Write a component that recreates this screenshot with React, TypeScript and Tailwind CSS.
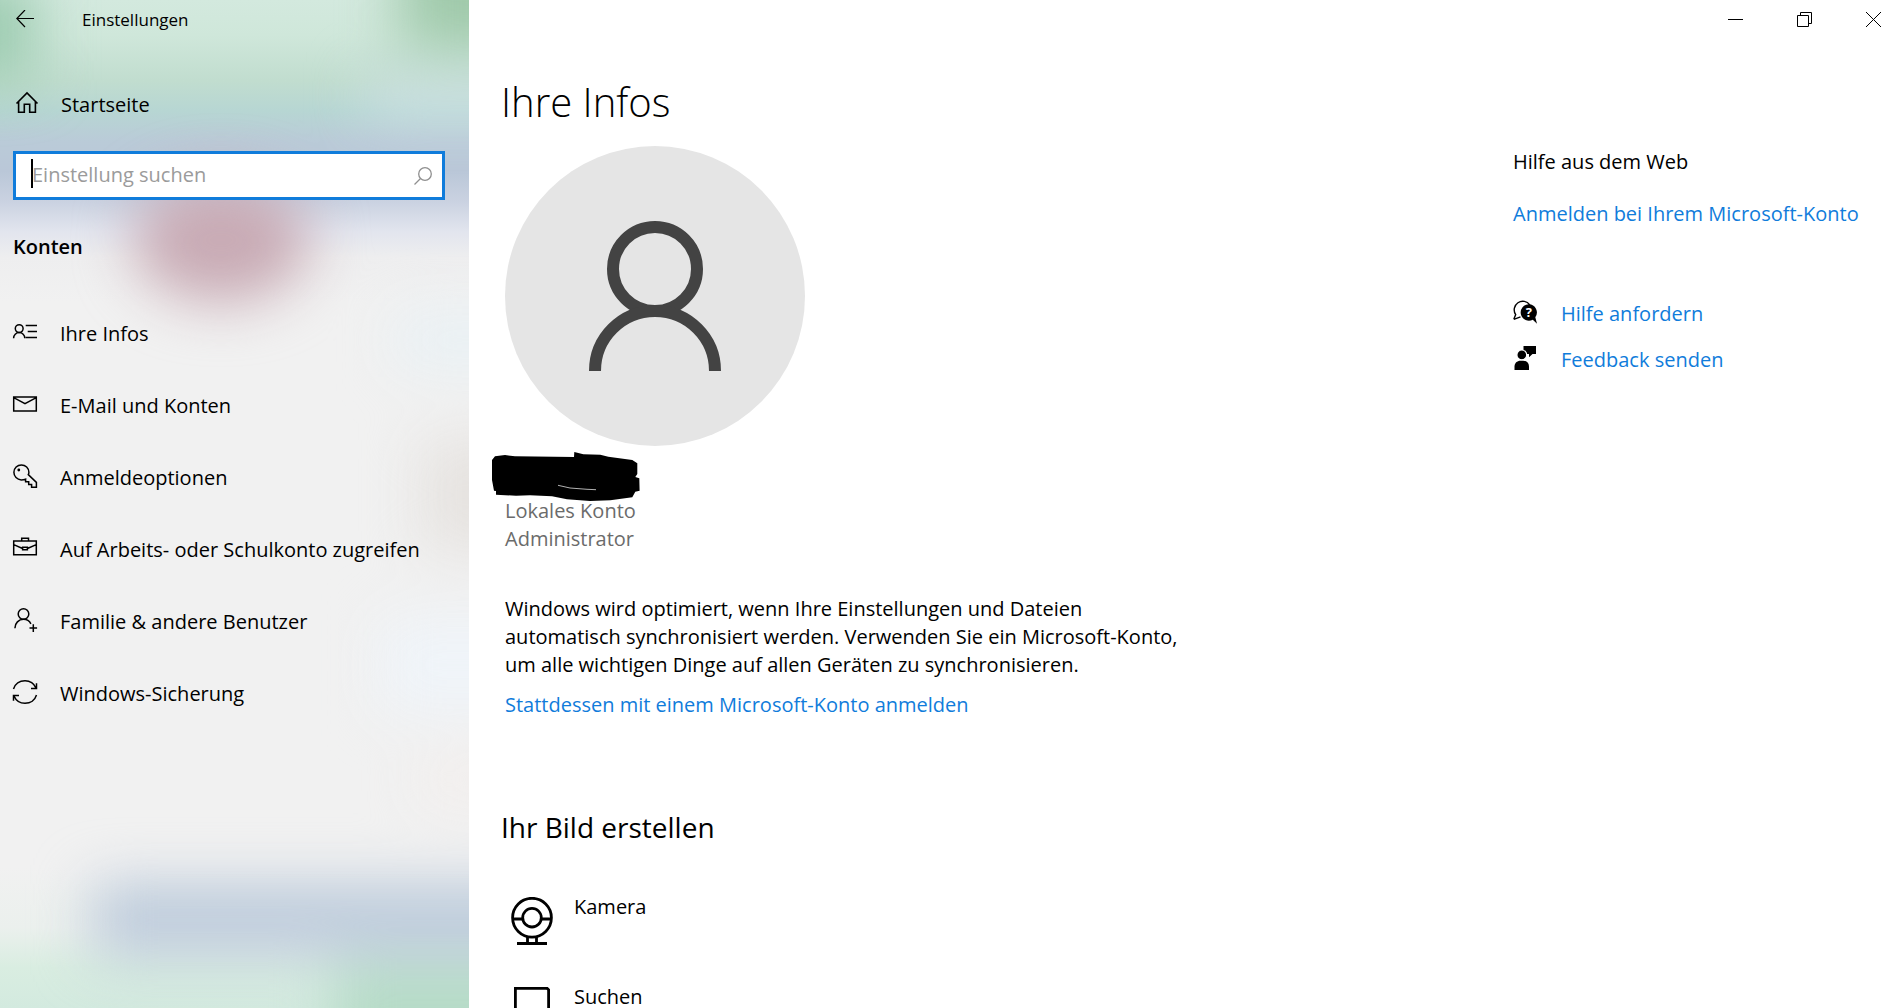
import { useState } from 'react';
import type { ReactNode } from 'react';

function NavIcon({ children }: { children: ReactNode }) {
  return (
    <svg viewBox="0 0 24 24" className="mb-1 size-6 shrink-0 overflow-visible" fill="none" stroke="currentColor" strokeWidth="1.5" aria-hidden="true">
      {children}
    </svg>
  );
}

const navItems = [
  {
    label: 'Ihre Infos',
    icon: (
      <>
        <circle cx="6.2" cy="8.6" r="3.9" />
        <path d="M.6 18.2c0-3.2 2.5-5.6 5.6-5.6s5.6 2.4 5.6 5.6M12.7 5.5H24M14.7 11.5H24M12.7 17.5H24" />
      </>
    ),
  },
  {
    label: 'E-Mail und Konten',
    icon: <path d="M.7 4.9h22.6v14H.7zM.7 5.6 12 11.6l11.3-6" />,
  },
  {
    label: 'Anmeldeoptionen',
    icon: (
      <>
        <path d="M15.3 10.6 23.4 18.4v4.9h-4.8v-2.8h-2.9v-2.8h-3.1v-2.6C11.5 15.5 10 15.9 8.2 15.9A7.5 7.5 0 1 1 15.9 8.3c0 .8-.2 1.6-.6 2.3z" />
        <circle cx="5.8" cy="6" r="1.4" fill="currentColor" stroke="none" />
      </>
    ),
  },
  {
    label: 'Auf Arbeits- oder Schulkonto zugreifen',
    icon: <path d="M.7 4.9h22.6v13.8H.7zM8.7 4.9V2.2h6.8v2.7M.7 8.6l8.9 3.9M23.3 8.6l-8.9 3.9M9.6 11.3h4.8v2.5H9.6z" />,
  },
  {
    label: 'Familie & andere Benutzer',
    icon: (
      <>
        <circle cx="10.5" cy="6" r="5.3" />
        <path d="M1.9 20.2c0-5 3.8-8.9 8.6-8.9 3.4 0 6 1.7 7.4 4.6M20.3 16.3v7.6M16.5 20.1h7.6" />
      </>
    ),
  },
  {
    label: 'Windows-Sicherung',
    icon: (
      <path d="M.5 9C2 4 6.6.7 12 .7c4.9 0 9.1 2.9 11 7.3M23.5 3.2V8.5H18M23.5 15c-1.5 5-6.1 8.3-11.5 8.3-4.9 0-9.1-2.9-11-7.3M.5 20.8V15.5H6" />
    ),
  },
];

function Backdrop() {
  return (
    <svg className="absolute inset-0 -z-10 size-full" viewBox="0 0 469 1008" preserveAspectRatio="none" aria-hidden="true">
      <defs>
        <linearGradient id="base" x1="0" y1="0" x2="0" y2="1">
          <stop offset="0" stopColor="#d3e9de" />
          <stop offset="0.035" stopColor="#cfe7da" />
          <stop offset="0.08" stopColor="#c1ddcf" />
          <stop offset="0.11" stopColor="#b7d6d3" />
          <stop offset="0.14" stopColor="#bacbd8" />
          <stop offset="0.17" stopColor="#bac7d8" />
          <stop offset="0.2" stopColor="#cad2e1" />
          <stop offset="0.23" stopColor="#e2e5ee" />
          <stop offset="0.255" stopColor="#eeeeef" />
          <stop offset="0.3" stopColor="#f1f1f1" />
          <stop offset="0.86" stopColor="#f1f1f1" />
          <stop offset="0.92" stopColor="#ebf0ed" />
          <stop offset="0.96" stopColor="#d9ede1" />
          <stop offset="1" stopColor="#d3eadf" />
        </linearGradient>
        <filter id="soft" filterUnits="userSpaceOnUse" x="-150" y="-150" width="800" height="1300" colorInterpolationFilters="sRGB">
          <feGaussianBlur stdDeviation="28" />
        </filter>
      </defs>
      <rect width="469" height="1008" fill="url(#base)" />
      <g filter="url(#soft)">
        <rect x="-120" y="-20" width="155" height="100" fill="#9ccbb0" />
        <rect x="400" y="-100" width="200" height="150" fill="#9fc9aa" />
        <rect x="365" y="78" width="240" height="34" fill="#d4e4ea" />
        <ellipse cx="221" cy="240" rx="88" ry="62" fill="#c8aab4" />
        <rect x="395" y="315" width="210" height="50" fill="#e8f1f5" />
        <rect x="420" y="440" width="180" height="110" fill="#e6e3e0" />
        <rect x="380" y="620" width="220" height="90" fill="#eff4f9" />
        <rect x="420" y="760" width="180" height="40" fill="#f3eeec" />
        <rect x="92" y="884" width="500" height="72" fill="#bccadb" />
        <rect x="335" y="968" width="260" height="140" fill="#b5dbc6" />
      </g>
    </svg>
  );
}

function Sidebar() {
  const [query, setQuery] = useState('');

  return (
    <aside className="relative isolate flex w-[469px] shrink-0 flex-col overflow-hidden">
      <Backdrop />
      <div className="flex h-10 items-center pl-4">
        <button type="button" aria-label="Zurück">
          <svg viewBox="0 0 18 18" className="mb-0.5 size-[18px]" fill="none" stroke="currentColor" strokeWidth="1.2">
            <path d="M18 8.5H.8M9 0 .8 8.5 9 17" />
          </svg>
        </button>
        <span className="ml-12 text-[17px]">Einstellungen</span>
      </div>

      <a href="#startseite" className="mt-[45px] flex h-10 items-center pl-[15px]">
        <svg viewBox="0 0 24 24" className="mb-1 size-6 shrink-0" fill="none" stroke="currentColor" strokeWidth="1.6" aria-hidden="true">
          <path d="M1.5 12.5 12 2l10.5 10.5M3.6 10.5v10.7h5.7v-8h5.4v8h5.7V10.5" />
        </svg>
        <span className="ml-[22px]">Startseite</span>
      </a>

      <div className="relative mt-[26px] mr-6 ml-[13px]">
        <input
          type="text"
          aria-label="Einstellung suchen"
          placeholder="Einstellung suchen"
          value={query}
          onChange={(e) => setQuery(e.target.value)}
          className="block h-[49px] w-full border-3 border-[#107cdb] bg-white pr-12 pb-0.5 pl-4 outline-none placeholder:text-[#9b9b9b]"
        />
        <span className="absolute top-2 left-[18px] h-[29px] w-0.5 bg-black" />
        <svg viewBox="0 0 18 18" className="absolute top-4 right-[13px] size-[18px]" fill="none" stroke="#8f8f8f" strokeWidth="1.3" aria-hidden="true">
          <circle cx="11" cy="7" r="6.3" />
          <path d="M6.5 11.5.5 17.5" />
        </svg>
      </div>

      <h2 className="mt-[33px] pl-[13px] font-semibold">Konten</h2>

      <nav className="mt-[37px]">
        {navItems.map((item) => (
          <a key={item.label} href="#" className="flex h-[72px] items-center pl-[13px]">
            <NavIcon>{item.icon}</NavIcon>
            <span className="ml-[23px]">{item.label}</span>
          </a>
        ))}
      </nav>
    </aside>
  );
}

function WindowControls() {
  return (
    <div className="flex h-[39px] shrink-0 justify-end gap-[18px]">
      <button type="button" aria-label="Minimieren" className="flex w-[51px] items-center justify-center">
        <svg viewBox="0 0 15 15" className="size-[15px]" fill="none" stroke="black">
          <path d="M0 7.5h15" />
        </svg>
      </button>
      <button type="button" aria-label="Verkleinern" className="flex w-[51px] items-center justify-center">
        <svg viewBox="0 0 15 15" className="size-[15px]" fill="none" stroke="black">
          <path d="M.5 3.5h11v11H.5zM3.5 3.5v-3h11v11h-3" />
        </svg>
      </button>
      <button type="button" aria-label="Schließen" className="flex w-[51px] items-center justify-center">
        <svg viewBox="0 0 15 15" className="size-[15px]" fill="none" stroke="black">
          <path d="M0 0l15 15M15 0 0 15" />
        </svg>
      </button>
    </div>
  );
}

function Profile() {
  return (
    <section className="pl-1">
      <svg viewBox="0 0 300 300" className="mt-4 size-[300px]" role="img" aria-label="Profilbild">
        <circle cx="150" cy="150" r="150" fill="#e5e5e5" />
        <g fill="none" stroke="#434343" strokeWidth="12">
          <circle cx="150" cy="123" r="42" />
          <path d="M90 225a60 60 0 0 1 120 0" />
        </g>
      </svg>
      <div className="relative h-[51px]">
        <svg viewBox="0 0 148 50" className="absolute top-1.5 -left-[13px] h-[50px] w-[148px]" aria-hidden="true">
          <path d="M0 8 3 4.3 13 3l10 1.300L82 5l.3-5 9 2.3 17 .4 8 2 24 3.3 5 3.3V22l-2 3 4 1.300.3 12.400-4.300 1-3 5.600-22 3L98 49l-23-1.700-15-3-22-1-14 .4-20-1V39l-2-.3L0 28z" />
          <path d="M66 33.3 78 36l17 1.300 9 .4" fill="none" stroke="white" strokeWidth=".7" />
        </svg>
      </div>
      <div className="text-[#6b6b6b]">
        <p>Lokales Konto</p>
        <p>Administrator</p>
      </div>
      <p className="mt-[42px] max-w-[690px]">
        Windows wird optimiert, wenn Ihre Einstellungen und Dateien automatisch synchronisiert werden. Verwenden Sie ein
        Microsoft-Konto, um alle wichtigen Dinge auf allen Geräten zu synchronisieren.
      </p>
      <a href="#anmelden" className="mt-3 inline-block text-[#107cdb]">
        Stattdessen mit einem Microsoft-Konto anmelden
      </a>
    </section>
  );
}

function PictureSources() {
  return (
    <div className="mt-[46px] flex flex-col pl-1">
      <button type="button" className="flex h-[90px] items-start text-left">
        <span className="w-[69px] pt-1 pl-1.5">
          <svg viewBox="0 0 42 48" className="h-12 w-[42px]" fill="none" stroke="black" strokeWidth="2.8" aria-hidden="true">
            <circle cx="21" cy="20.7" r="19.4" />
            <circle cx="21" cy="20.7" r="9.3" />
            <path d="M1.5 22h10M30.5 22h10M16.5 40v6M25.5 40v6M6 46.5h30" />
          </svg>
        </span>
        Kamera
      </button>
      <button type="button" className="flex h-[90px] items-start text-left">
        <span className="w-[69px] pt-1 pl-[9px]">
          <svg viewBox="0 0 36 44" className="h-11 w-9" fill="none" stroke="black" strokeWidth="2.8" aria-hidden="true">
            <path d="M1.4 42V1.4h31.8l1.4 1.4V42z" />
          </svg>
        </span>
        Suchen
      </button>
    </div>
  );
}

function HelpPanel() {
  return (
    <aside className="w-[386px] shrink-0 pt-[109px]">
      <h2>Hilfe aus dem Web</h2>
      <a href="#hilfe-konto" className="mt-6 block text-[#107cdb]">
        Anmelden bei Ihrem Microsoft-Konto
      </a>
      <a href="#hilfe" className="mt-[72px] flex items-center text-[#107cdb]">
        <svg viewBox="0 0 24 24" className="mb-1 size-6 overflow-visible" aria-hidden="true">
          <path d="M.8 19.3 2.7 14.6A8.3 8.3 0 1 1 16.8 5M.8 19.3l6.7-2.5" fill="none" stroke="black" strokeWidth="1.4" />
          <path d="M15.8 4.3a8.2 8.2 0 1 0 4 15.4l4.2 4-1.7-6.4a8.2 8.2 0 0 0-6.5-13z" fill="black" />
          <text x="15.9" y="17.3" textAnchor="middle" fontSize="13" fontWeight="700" fill="white">
            ?
          </text>
        </svg>
        <span className="ml-6">Hilfe anfordern</span>
      </a>
      <a href="#feedback" className="mt-[18px] flex items-center text-[#107cdb]">
        <svg viewBox="0 0 24 24" className="mb-1 size-6" aria-hidden="true">
          <path d="M10.5 0H23v8h-3.5l-3.5 3.3V8h-5.5z" />
          <circle cx="8.8" cy="8.9" r="4.9" stroke="white" strokeWidth="1.2" />
          <path d="M1.5 24v-3.5c0-3.500 2.500-5.800 6-5.800h2.700c3.500 0 5.800 2.300 5.800 5.800V24z" />
        </svg>
        <span className="ml-6">Feedback senden</span>
      </a>
    </aside>
  );
}

export default function App() {
  return (
    <div className="flex h-screen overflow-hidden bg-white font-['Open_Sans',sans-serif] text-[20px] leading-7 text-black">
      <Sidebar />
      <div className="flex min-w-0 flex-1 flex-col">
        <WindowControls />
        <div className="flex min-h-0 flex-1 overflow-hidden">
          <main className="min-w-0 flex-1 pt-[35px] pl-8">
            <h1 className="text-[40px] leading-[56px] font-light">Ihre Infos</h1>
            <Profile />
            <h2 className="mt-[88px] text-[28px] leading-10">Ihr Bild erstellen</h2>
            <PictureSources />
          </main>
          <HelpPanel />
        </div>
      </div>
    </div>
  );
}
